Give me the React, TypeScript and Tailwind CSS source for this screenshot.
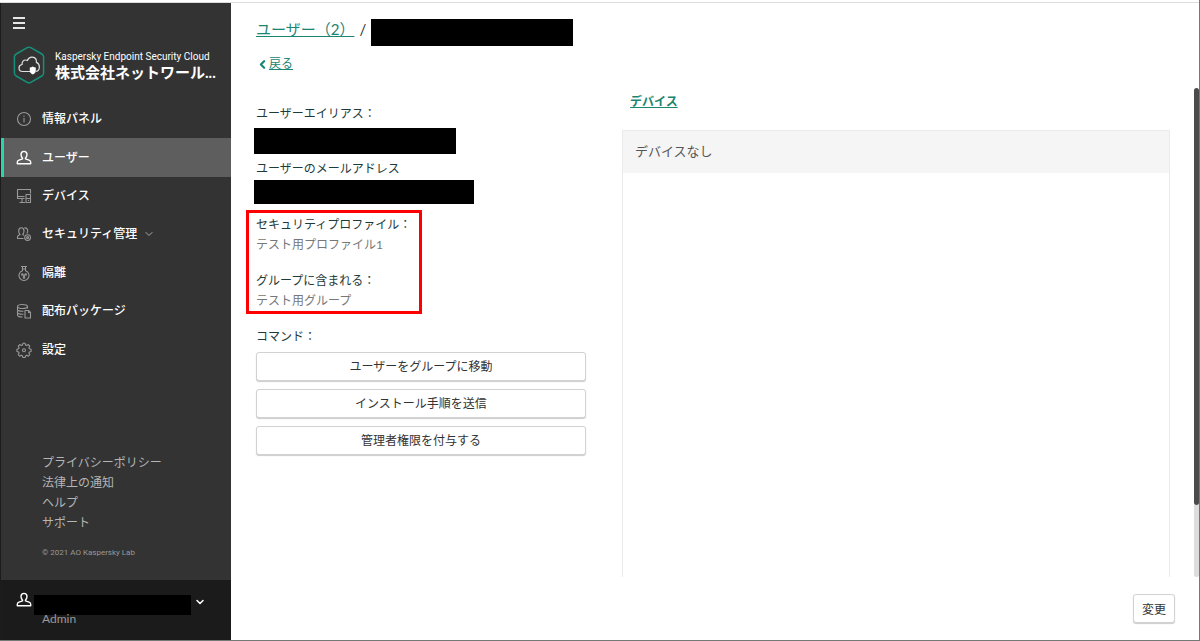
import React from 'react';
import { ChevronDown, ChevronLeft } from 'lucide-react';

interface NavItem {
  label: string;
  icon: React.ReactNode;
  active?: boolean;
  expandable?: boolean;
}

const Icon = ({ children, className = '' }: { children: React.ReactNode; className?: string }) => (
  <svg
    viewBox="0 0 16 16"
    className={`size-4 shrink-0 ${className}`}
    fill="none"
    stroke="currentColor"
    strokeWidth="1.1"
    strokeLinejoin="round"
    aria-hidden="true"
  >
    {children}
  </svg>
);

const PersonIcon = ({ className = '' }: { className?: string }) => (
  <Icon className={className}>
    <path
      strokeWidth="1.4"
      d="M8 1.400c-1.900 0-3 1.300-3 3.200 0 1.400.6 2.500 1.500 3.300v1L3 10.100c-1.200.4-1.700 1.100-1.700 2.200v1.500h13.400v-1.500c0-1.100-.5-1.800-1.700-2.200L9.500 8.900v-1C10.400 7.100 11 6 11 4.600c0-1.900-1.100-3.200-3-3.200z"
    />
  </Icon>
);

const navItems: NavItem[] = [
  {
    label: '情報パネル',
    icon: (
      <Icon>
        <circle cx="8" cy="8" r="6.5" />
        <path d="M8 7v4.500M8 4.500v1.200" />
      </Icon>
    ),
  },
  { label: 'ユーザー', icon: <PersonIcon />, active: true },
  {
    label: 'デバイス',
    icon: (
      <Icon>
        <path d="M8.500 10.500h-7v-9h13v4M1.500 8.500h7M6 10.500v3.500M3.500 14.500h5.500" />
        <rect x="10" y="6.500" width="4.500" height="8" />
        <path d="M12 12.500h1M10 10.500h4.500" />
      </Icon>
    ),
  },
  {
    label: 'セキュリティ管理',
    expandable: true,
    icon: (
      <Icon>
        <path d="M7.500 12.500h-6v-1.700c0-1 .8-1.500 2.500-2.300-.8-.8-1.300-2-1.300-3.600 0-1.900 1-3.100 2.600-3.100S8 3 8 4.900c0 1.600-.5 2.800-1.300 3.600l1.300.7" />
        <path d="M8.300 2c2-.4 3.400.8 3.400 2.900 0 1-.3 1.900-.8 2.600" />
        <circle cx="11.600" cy="11.600" r="2.900" />
        <circle cx="11.600" cy="11.600" r="1" />
      </Icon>
    ),
  },
  {
    label: '隔離',
    icon: (
      <Icon>
        <path d="M5 1.500h6M6.500 1.500v4.200a5 5 0 1 0 3 0V1.500M6.500 4h3" />
        <circle cx="6.300" cy="9.500" r=".8" />
        <circle cx="9.700" cy="9.500" r=".8" />
        <circle cx="8" cy="12.400" r=".8" />
        <path d="M8 10.400v1M7 10l1 .5 1-.5" />
      </Icon>
    ),
  },
  {
    label: '配布パッケージ',
    icon: (
      <Icon>
        <ellipse cx="6.500" cy="3.500" rx="5" ry="2" />
        <path d="M1.500 3.500V12c0 1.100 2 2 5 2M11.500 3.500v2M1.500 6.300c0 1.100 2.200 2 5 2h1M1.500 9.200c0 1.100 2.200 2 5 2h1" />
        <path d="M9 7.500h3.500l2 2v5.500H9zM12.500 7.500v2h2" />
      </Icon>
    ),
  },
  {
    label: '設定',
    icon: (
      <Icon>
        <path d="M6.900 1.300h2.200l.5 1.700 1.100.5 1.600-.9 1.500 1.500-.9 1.600.5 1.100 1.700.5v2.200l-1.700.5-.5 1.100.9 1.600-1.500 1.500-1.600-.9-1.100.5-.5 1.700H6.900l-.5-1.700-1.100-.5-1.600.9-1.500-1.500.9-1.600-.5-1.100-1.700-.5V7.300l1.700-.5.5-1.100-.9-1.600 1.500-1.500 1.600.9L6.400 3z" />
        <circle cx="8" cy="8.300" r="1.500" />
      </Icon>
    ),
  },
];

const footerLinks = ['プライバシーポリシー', '法律上の通知', 'ヘルプ', 'サポート'];
const commands = ['ユーザーをグループに移動', 'インストール手順を送信', '管理者権限を付与する'];

const Logo = () => (
  <svg viewBox="0 0 32 38" className="h-[38px] w-8 shrink-0" fill="none" aria-hidden="true">
    <path
      d="M14.200 1.700a3.600 3.600 0 0 1 3.600 0l11 6.300a3.600 3.600 0 0 1 1.800 3.100v15.800a3.600 3.600 0 0 1-1.800 3.100l-11 6.300a3.600 3.600 0 0 1-3.600 0l-11-6.300a3.600 3.600 0 0 1-1.800-3.100V11.100A3.600 3.600 0 0 1 3.200 8z"
      stroke="#15917a"
      strokeWidth="1.5"
    />
    <path
      d="M17 25.500H9.500c-2 0-3.500-1.500-3.500-3.500 0-1.900 1.300-3.200 3.100-3.500-.3-2.800 1.500-4.500 3.600-4.500.7 0 1.200.1 1.700.4 1-2.400 2.900-3.500 5-3.300 2.700.3 4.300 2.500 4 5.300 1.900.8 3 2.300 3 4.500 0 2.300-1.300 4-3.300 4.500"
      stroke="#e0e0e0"
      strokeWidth="1.2"
    />
    <path d="M19.800 20.500c1 .7 1.900 1 3 1v3.200c0 1.800-1.200 2.900-3 3.800-1.800-.9-3-2-3-3.800v-3.200c1.100 0 2-.3 3-1z" fill="#fff" />
  </svg>
);

const Sidebar = () => (
  <aside className="flex w-[231px] shrink-0 flex-col border-l border-[#1c1c1c] bg-[#333] text-white">
    <button type="button" aria-label="メニュー" className="ml-3 mt-3.5 flex h-3 w-3 flex-col justify-between">
      <span className="h-0.5 w-full bg-[#e6e6e6]" />
      <span className="h-0.5 w-full bg-[#e6e6e6]" />
      <span className="h-0.5 w-full bg-[#e6e6e6]" />
    </button>

    <div className="mt-[17px] flex items-center gap-2 pl-3">
      <Logo />
      <div className="whitespace-nowrap pl-0.5">
        <div className="font-['Roboto',sans-serif] text-[10px] leading-[14px]">Kaspersky Endpoint Security Cloud</div>
        <div className="text-[15px] font-bold leading-4">株式会社ネットワール...</div>
      </div>
    </div>

    <nav className="mt-4 grid h-[269px] auto-rows-fr">
      {navItems.map(item => (
        <a
          key={item.label}
          href="#"
          className={`flex items-center gap-2.5 border-l-[3px] pl-3 text-[12px] font-medium ${
            item.active ? 'border-[#2ad4ae] bg-[#5e5e5e]' : 'border-transparent'
          }`}
        >
          <span className={item.active ? 'text-white' : 'text-[#999]'}>{item.icon}</span>
          {item.label}
          {item.expandable && <ChevronDown size={12} strokeWidth={2} className="-ml-1 text-[#aaa]" />}
        </a>
      ))}
    </nav>

    <div className="mt-auto flex flex-col pl-[41px] text-[12px] leading-5 text-[#b5b5b5]">
      {footerLinks.map(link => (
        <a key={link} href="#" className="self-start">{link}</a>
      ))}
      <p className="mb-[17px] mt-2.5 font-['Roboto',sans-serif] text-[8px] text-[#999]">© 2021 AO Kaspersky Lab</p>
    </div>

    <div className="h-[60px] bg-[#1b1b1b] pl-[15px] pt-3">
      <div className="flex items-start gap-0.5">
        <PersonIcon />
        <span className="mt-[3px] h-5 w-[157px] bg-black" />
        <button type="button" aria-label="アカウント" className="ml-px mt-1">
          <ChevronDown size={12} strokeWidth={3} />
        </button>
      </div>
      <div className="-mt-1 pl-[26px] text-[12px] leading-4 text-[#999]">Admin</div>
    </div>
  </aside>
);

const CommandButton = ({ label, className = '' }: { label: string; className?: string }) => (
  <button
    type="button"
    className={`h-[29px] rounded-[3px] border border-[#d2d2d2] bg-white pt-0.5 text-[12px] text-[#333] shadow-[0_1px_1px_#ccc] ${className}`}
  >
    {label}
  </button>
);

const UserDetails = () => (
  <section className="w-[330px] shrink-0 text-[12px] leading-5 text-[#1d3b3a]">
    <div>ユーザーエイリアス：</div>
    <div className="-ml-0.5 mt-1 h-[26px] w-[202px] bg-black" />
    <div className="mt-[5px]">ユーザーのメールアドレス</div>
    <div className="-ml-0.5 mt-px h-6 w-[220px] bg-black" />

    <div className="-ml-2.5 mt-1.5 w-44 border-[3px] border-[#f00] pl-[7px] pt-0.5">
      <div>セキュリティプロファイル：</div>
      <div className="text-[#777]">テスト用プロファイル1</div>
      <div className="mt-4">グループに含まれる：</div>
      <div className="text-[#777]">テスト用グループ</div>
    </div>

    <div className="mt-[13px]">コマンド：</div>
    <div className="mt-[5px] flex flex-col gap-2">
      {commands.map(label => (
        <CommandButton key={label} label={label} />
      ))}
    </div>
  </section>
);

const DevicesPanel = () => (
  <section className="-mt-3 flex min-w-0 flex-1 flex-col">
    <a href="#" className="ml-2 self-start text-[12px] font-bold leading-5 text-[#1a8571] underline">
      デバイス
    </a>
    <div className="mt-[18px] flex-1 border border-b-0 border-[#ebebeb]">
      <div className="bg-[#f5f5f5] px-3 pb-3 pt-2.5 text-[13px] leading-5 text-[#555]">デバイスなし</div>
    </div>
  </section>
);

const App: React.FC = () => (
  <div className="flex min-h-screen flex-col border-b border-r border-[#777] bg-white font-['Lato','Noto_Sans_CJK_JP',sans-serif]">
    <div className="h-[3px] border-b border-[#ddd]" />
    <div className="flex flex-1">
      <Sidebar />
      <main className="flex min-w-0 flex-1 flex-col">
        <div className="flex flex-1">
          <div className="flex min-w-0 flex-1 flex-col pl-[25px] pr-6">
            <header className="pt-4">
              <h1 className="flex items-start gap-[5px] text-[15px] leading-5 text-[#333]">
                <a href="#" className="text-[#1a8571] underline">ユーザー（2）</a>
                <span>/</span>
                <span className="h-[27px] w-[202px] bg-black" />
              </h1>
              <a href="#" className="mt-2 inline-flex items-center text-[12px] leading-5 text-[#1a8571]">
                <ChevronLeft size={13} strokeWidth={4} />
                <span className="underline">戻る</span>
              </a>
            </header>
            <div className="mt-[27px] flex flex-1 gap-9">
              <UserDetails />
              <DevicesPanel />
            </div>
          </div>
          {/* scroll track */}
          <div className="flex w-[5px] flex-col pt-[85px]">
            <div className="h-[417px] rounded-full bg-[#4b4b4b]" />
            <div className="flex-1 rounded-b-full bg-[#ddd]" />
          </div>
        </div>
        <footer className="flex h-[63px] items-center justify-end pr-6">
          <CommandButton label="変更" className="w-[42px]" />
        </footer>
      </main>
    </div>
  </div>
);

export default App;
